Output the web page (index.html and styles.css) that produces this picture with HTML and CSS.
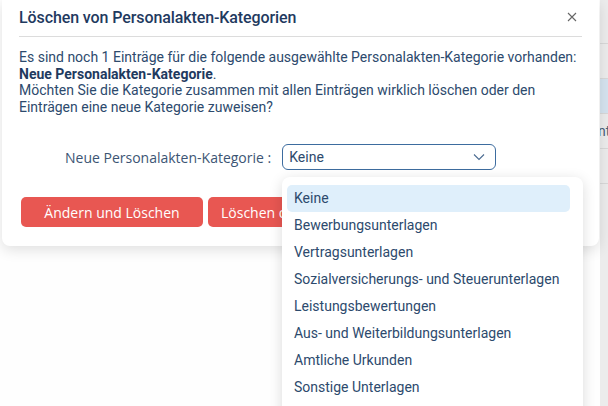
FILE: index.html
```html
<!DOCTYPE html>
<html lang="de">
<head>
<meta charset="utf-8">
<link rel="stylesheet" href="styles.css">
</head>
<body>
<div class="page">
  <div class="backdrop">
    <div class="strip">
      <div class="strip-row"></div>
      <div class="strip-row sel"></div>
      <div class="strip-row"><span class="strip-text">nt</span></div>
      <div class="strip-row"></div>
      <div class="strip-row"></div>
    </div>
  </div>

  <div class="dialog">
    <div class="dialog-header">
      <h1 class="dialog-title">Löschen von Personalakten-Kategorien</h1>
      <svg class="close" width="10" height="10" viewBox="0 0 10 10"><path d="M1 1L9 9M9 1L1 9" stroke="#666" stroke-width="1.1" fill="none"/></svg>
    </div>
    <p class="message">Es sind noch 1 Einträge für die folgende ausgewählte Personalakten-Kategorie vorhanden:<br><strong>Neue Personalakten-Kategorie</strong>.<br>Möchten Sie die Kategorie zusammen mit allen Einträgen wirklich löschen oder den Einträgen eine neue Kategorie zuweisen?</p>
    <div class="form-row">
      <label class="form-label">Neue Personalakten-Kategorie :</label>
      <div class="select">
        <span class="select-value">Keine</span>
        <svg class="chevron" width="12" height="8" viewBox="0 0 12 8"><path d="M1 1.5L6 6.5L11 1.5" stroke="#4a6a90" stroke-width="1.1" fill="none"/></svg>
      </div>
    </div>
    <div class="actions">
      <button class="btn">Ändern und Löschen</button>
      <button class="btn second">Löschen ohne Zuweisen</button>
    </div>
  </div>

  <ul class="dropdown">
    <li class="option active">Keine</li>
    <li class="option">Bewerbungsunterlagen</li>
    <li class="option">Vertragsunterlagen</li>
    <li class="option">Sozialversicherungs- und Steuerunterlagen</li>
    <li class="option">Leistungsbewertungen</li>
    <li class="option">Aus- und Weiterbildungsunterlagen</li>
    <li class="option">Amtliche Urkunden</li>
    <li class="option">Sonstige Unterlagen</li>
  </ul>
</div>
</body>
</html>
```
FILE: styles.css
```css
* { box-sizing: border-box; }
html, body { margin: 0; padding: 0; }
body {
  width: 608px;
  height: 406px;
  overflow: hidden;
  background: #fefefe;
  font-family: Roboto, "Liberation Sans", sans-serif;
  color: #2d4a6d;
}
.page {
  position: relative;
  width: 608px;
  height: 406px;
  overflow: hidden;
}
.backdrop {
  display: flex;
  justify-content: flex-end;
  height: 100%;
}
.strip {
  width: 8px;
  height: 100%;
  background: #ececec;
  padding-top: 43px;
}
.strip-row {
  height: 35px;
  border-top: 1px solid #d8d8d8;
  overflow: hidden;
  white-space: nowrap;
}
.strip-row.sel { background: #d5e3ef; }
.strip-text {
  font-size: 14px;
  line-height: 35px;
  color: #4a5f78;
  margin-left: -2px;
}
.dialog {
  position: absolute;
  left: 2px;
  top: 0;
  width: 597px;
  background: #fff;
  border-radius: 0 0 8px 8px;
  box-shadow: 0 4px 14px rgba(0,0,0,0.12);
  padding: 0 17px 19px 17px;
}
.dialog-header {
  display: flex;
  align-items: center;
  justify-content: space-between;
  height: 37px;
  border-bottom: 1px solid #dcdcdc;
  padding-right: 5px;
}
.dialog-title {
  margin: 0;
  font-size: 16px;
  font-weight: 500;
  color: #1f3a5f;
  letter-spacing: -0.1px;
  padding-bottom: 2px;
}
.close { margin-bottom: 3px; }
.message {
  margin: 12px 0 0 0;
  font-size: 14px;
  line-height: 16.6px;
}
.message strong { font-weight: 700; color: #1f3a5f; }
.form-row {
  display: flex;
  align-items: center;
  margin-top: 29px;
  padding-left: 46px;
  gap: 11px;
}
.form-label {
  font-family: "Open Sans", "Liberation Sans", sans-serif;
  font-size: 14px;
  color: #3c5574;
  white-space: nowrap;
}
.select {
  width: 214px;
  height: 26px;
  border: 1px solid #3d6c9f;
  border-radius: 6px;
  display: flex;
  align-items: center;
  justify-content: space-between;
  padding: 0 10px 0 6px;
}
.select-value { font-size: 14px; color: #2d4a6d; }
.actions {
  display: flex;
  gap: 5px;
  margin-top: 27px;
  padding-left: 2px;
}
.btn {
  height: 30px;
  border: none;
  border-radius: 5px;
  background: #e85752;
  color: #fff;
  font-family: "Open Sans", "Liberation Sans", sans-serif;
  font-size: 14px;
  padding: 0;
  width: 182px;
  white-space: nowrap;
  text-align: center;
}
.btn.second { width: 200px; padding: 0 13px; text-align: left; }
.dropdown {
  position: absolute;
  left: 282px;
  top: 177px;
  width: 301px;
  height: 260px;
  margin: 0;
  list-style: none;
  background: #fff;
  border-radius: 8px;
  box-shadow: 0 3px 14px rgba(0,0,0,0.14);
  padding: 8px 13px 0 5px;
}
.option {
  height: 27px;
  line-height: 27px;
  padding-left: 7px;
  font-size: 14px;
  color: #2d4a6d;
  border-radius: 5px;
  white-space: nowrap;
}
.option.active { background: #dfeffb; }
```
